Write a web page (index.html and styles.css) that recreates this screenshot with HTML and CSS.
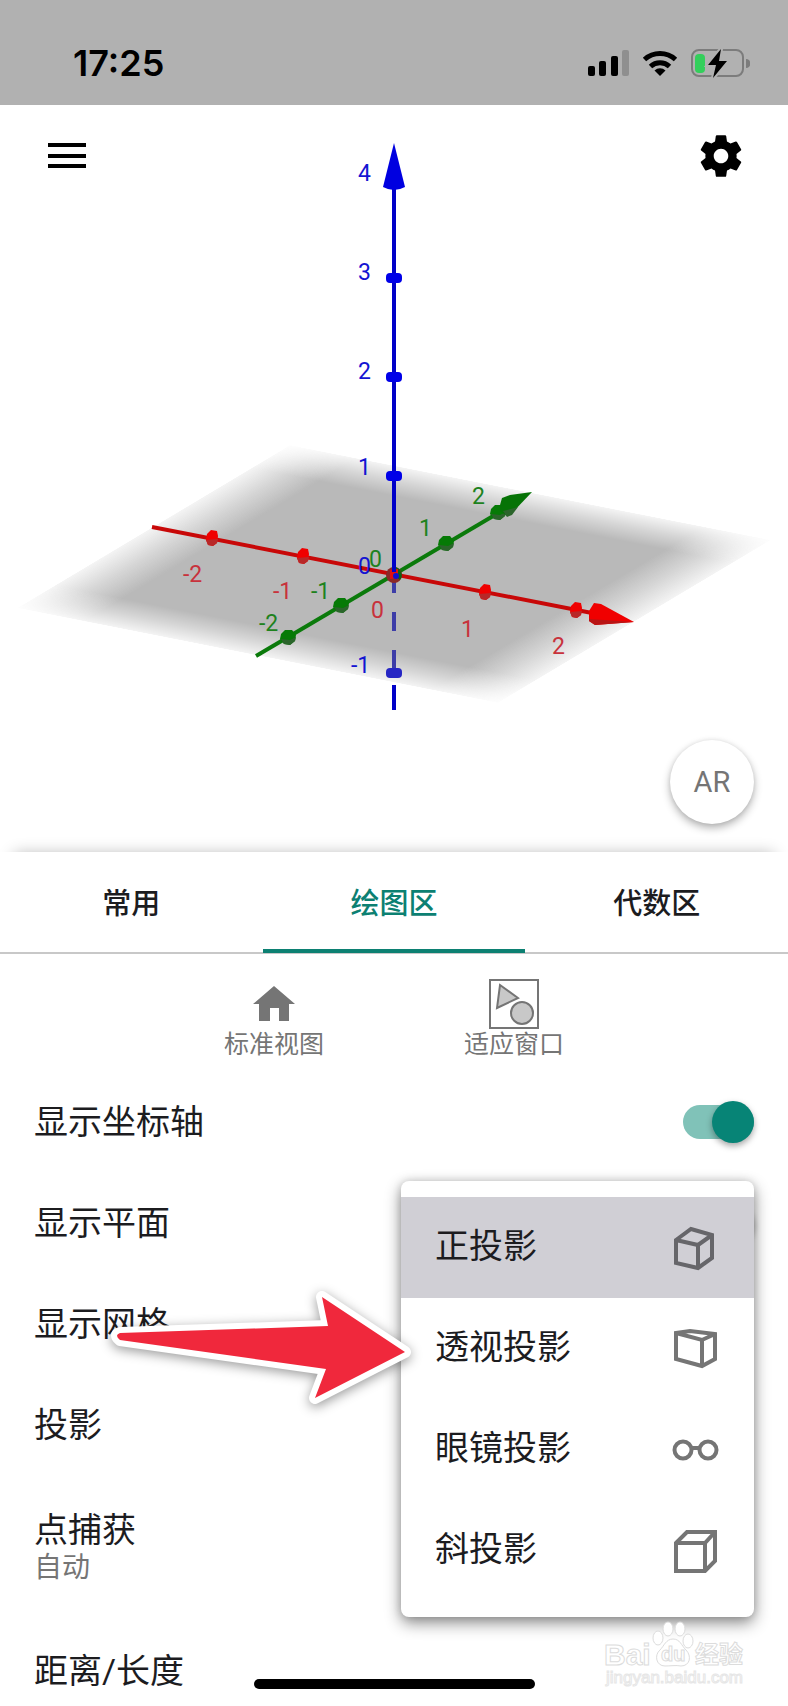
FILE: index.html
```
<!DOCTYPE html>
<html lang="zh-CN">
<head>
    <meta charset="UTF-8">
    <meta name="viewport" content="width=device-width, initial-scale=1">
    <title>3D 计算器</title>
    <link rel="stylesheet" href="styles.css">
</head>
<body>
<div id="app">
    <header class="status">
        <span class="time">17:25</span>
        <svg class="status-icons" viewBox="588 46 162 32" width="162" height="32">
            <rect x="588" y="65" width="7" height="10" rx="2"/>
            <rect x="599" y="60" width="7" height="15" rx="2"/>
            <rect x="611" y="55" width="7" height="20" rx="2"/>
            <rect x="622" y="49" width="7" height="26" rx="2" fill="#8f8f8f"/>
            <g fill="none" stroke="#000" stroke-width="5">
                <path d="M644.500 58.500a23 23 0 0 1 31 0"/>
                <path d="M650.500 65.500a14 14 0 0 1 19 0"/>
            </g>
            <path d="M660 75l-5.500-5.500a8 8 0 0 1 11 0z"/>
            <rect x="692" y="49" width="51" height="26" rx="7" fill="none" stroke="#7c7c7c" stroke-width="2"/>
            <path d="M746 58a4.500 4.500 0 0 1 0 9z" fill="#7c7c7c"/>
            <rect x="695" y="53" width="10" height="19" rx="4" fill="#33cf5b"/>
            <path d="M721 48l-13 16h8l-3 13 14-17h-8z" stroke="#b1b1b1" stroke-width="4"/>
            <path d="M721 48l-13 16h8l-3 13 14-17h-8z"/>
        </svg>
    </header>

    <main class="view">
        <svg class="scene" viewBox="0 105 788 747">
            <defs>
                <linearGradient id="fade-u">
                    <stop offset="0" stop-color="#fff" stop-opacity=".15"/>
                    <stop offset=".07" stop-color="#fff" stop-opacity=".6"/>
                    <stop offset=".14" stop-color="#fff"/>
                    <stop offset=".86" stop-color="#fff"/>
                    <stop offset=".93" stop-color="#fff" stop-opacity=".6"/>
                    <stop offset="1" stop-color="#fff" stop-opacity=".15"/>
                </linearGradient>
                <linearGradient id="fade-v" x2="0" y2="1">
                    <stop offset="0" stop-color="#b9b9b9" stop-opacity=".15"/>
                    <stop offset=".07" stop-color="#b9b9b9" stop-opacity=".6"/>
                    <stop offset=".14" stop-color="#b9b9b9"/>
                    <stop offset=".86" stop-color="#b9b9b9"/>
                    <stop offset=".93" stop-color="#b9b9b9" stop-opacity=".6"/>
                    <stop offset="1" stop-color="#b9b9b9" stop-opacity=".15"/>
                </linearGradient>
                <mask id="edge" maskUnits="userSpaceOnUse" x="0" y="0" width="100" height="100">
                    <rect width="100" height="100" fill="url(#fade-u)"/>
                </mask>
                <g id="tick-x">
                    <path d="M-5-4L-1-8 5-7 6-2 5 5 1 8-4 7-6 2z" fill="#f00000"/>
                    <path d="M-6 2L6 1 5 5 1 8-4 7z" fill="#b82828"/>
                </g>
                <g id="tick-y">
                    <path d="M-7-3L-3-7 4-7 8-2 7 4 2 8-4 7-8 2z" fill="#067a06"/>
                    <path d="M-7 2L2 3 8 0 7 4 2 8-4 7z" fill="#2b652b"/>
                </g>
                <rect id="tick-z" x="-8" y="-5" width="16" height="10" rx="4"/>
            </defs>

            <!-- xOy 平面 -->
            <g transform="matrix(2.73 -1.63 4.81 .95 17 608)">
                <rect width="100" height="100" fill="url(#fade-v)" mask="url(#edge)"/>
            </g>

            <!-- z 轴(平面下方) -->
            <path d="M394 576v17M394 612v19M394 650v20" stroke="#3d3da8" stroke-width="4"/>
            <path d="M394 685v25" stroke="#0000c8" stroke-width="4"/>

            <!-- y 轴 -->
            <path d="M256 656L505 509" stroke="#0b7a0b" stroke-width="4"/>
            <use href="#tick-y" x="288" y="637"/>
            <use href="#tick-y" x="341" y="605"/>
            <use href="#tick-y" x="446" y="543"/>
            <use href="#tick-y" x="498" y="512"/>
            <path d="M500 505l2-7 8-3 22-3-20 21-5 3-7-5z" fill="#067306"/>
            <path d="M503 511l15-4-6 8-5 2z" fill="#2b652b"/>

            <!-- x 轴 -->
            <path d="M152 527L592 613" stroke="#c80808" stroke-width="4"/>
            <use href="#tick-x" x="212" y="538"/>
            <use href="#tick-x" x="303" y="556"/>
            <use href="#tick-x" x="485" y="592"/>
            <use href="#tick-x" x="576" y="610"/>
            <path d="M589 611l5-8 7 1 33 18-39 3-6-4z" fill="#f00000"/>
            <path d="M589 619l45 3-39 3-6-4z" fill="#b81414"/>

            <!-- z 轴 -->
            <circle cx="394" cy="575" r="8" fill="#8c2828"/>
            <path d="M394 567a8 8 0 0 1 6 13l-6-5z" fill="#125f12"/>
            <path d="M390 570l8-1v9l-8 1z" fill="#e01010"/>
            <path d="M394 185v387" stroke="#0000c8" stroke-width="4"/>
            <circle cx="396" cy="576" r="3" fill="#1010d0"/>
            <path d="M394 143l11 44q-11 6-22 0z" fill="#0000e0"/>
            <g fill="#0000e8">
                <use href="#tick-z" x="394" y="278"/>
                <use href="#tick-z" x="394" y="377"/>
                <use href="#tick-z" x="394" y="476"/>
            </g>
            <use href="#tick-z" x="394" y="673" fill="#2626c4"/>

            <g class="num num-z">
                <text x="358" y="181">4</text>
                <text x="358" y="280">3</text>
                <text x="358" y="379">2</text>
                <text x="358" y="475">1</text>
                <text x="358" y="574">0</text>
                <text x="351" y="673">-1</text>
            </g>
            <g class="num num-y">
                <text x="369" y="567">0</text>
                <text x="419" y="536">1</text>
                <text x="472" y="504">2</text>
                <text x="311" y="599">-1</text>
                <text x="259" y="631">-2</text>
            </g>
            <g class="num num-x">
                <text x="183" y="582">-2</text>
                <text x="273" y="599">-1</text>
                <text x="371" y="618">0</text>
                <text x="461" y="637">1</text>
                <text x="552" y="654">2</text>
            </g>
        </svg>
        <button class="icon-btn menu-btn" aria-label="菜单">
            <svg viewBox="0 0 38 26" width="38" height="26"><path d="M0 0h38v4H0zM0 11h38v4H0zM0 21h38v4H0z"/></svg>
        </button>
        <button class="icon-btn gear-btn" aria-label="设置">
            <svg viewBox="0 0 24 24" width="50" height="50"><path d="M19.430 12.980c.04-.32.07-.64.07-.98s-.03-.66-.07-.98l2.110-1.650c.19-.15.24-.42.12-.64l-2-3.460c-.12-.22-.39-.3-.61-.22l-2.490 1c-.52-.4-1.080-.73-1.690-.98l-.38-2.650C14.460 2.180 14.250 2 14 2h-4c-.25 0-.46.18-.49.42l-.38 2.650c-.61.25-1.170.59-1.690.98l-2.490-1c-.23-.09-.49 0-.61.22l-2 3.460c-.13.22-.07.49.12.64l2.110 1.650c-.04.32-.07.65-.07.98s.03.66.07.98l-2.110 1.650c-.19.15-.24.42-.12.64l2 3.460c.12.22.39.3.61.22l2.490-1c.52.4 1.080.73 1.690.98l.38 2.650c.03.24.24.42.49.42h4c.25 0 .46-.18.49-.42l.38-2.650c.61-.25 1.170-.59 1.690-.98l2.490 1c.23.09.49 0 .61-.22l2-3.460c.12-.22.07-.49-.12-.64l-2.110-1.650zM12 15.500c-1.930 0-3.500-1.570-3.500-3.500s1.570-3.500 3.500-3.500 3.500 1.570 3.500 3.500-1.570 3.500-3.500 3.500z"/></svg>
        </button>
        <button class="ar-btn">AR</button>
    </main>

    <section class="panel">
        <nav class="tabs">
            <button>常用</button>
            <button class="selected">绘图区</button>
            <button>代数区</button>
        </nav>

        <div class="actions">
            <button>
                <svg viewBox="0 0 50 50" width="50" height="50"><path d="M25 7l21 18h-6v17H30V29h-9v13H10V25H4z" fill="#757575"/></svg>
                <span>标准视图</span>
            </button>
            <button>
                <svg viewBox="0 0 50 50" width="50" height="50" fill="#c8c8c8" stroke="#757575" stroke-width="2">
                    <rect x="1" y="1" width="48" height="48" fill="none"/>
                    <path d="M11 6l18 13L8 29z"/>
                    <circle cx="33" cy="34" r="11"/>
                </svg>
                <span>适应窗口</span>
            </button>
        </div>

        <div class="settings">
            <div class="row">
                <label for="axes">显示坐标轴</label>
                <input type="checkbox" class="switch" id="axes" checked>
            </div>
            <div class="row">
                <label for="plane">显示平面</label>
                <input type="checkbox" class="switch" id="plane" checked>
            </div>
            <div class="row">
                <label for="grid">显示网格</label>
                <input type="checkbox" class="switch" id="grid">
            </div>
            <div class="row"><span>投影</span></div>
            <div class="row row-double">
                <div>点捕获<small>自动</small></div>
            </div>
            <div class="row"><span>距离/长度</span></div>

            <div class="dropdown">
                <button class="selected">
                    <span>正投影</span>
                    <svg viewBox="0 0 44 44" width="44" height="44"><path d="M2 14L17 3l21 6v23L24 42 2 37zl22 5 14-10M24 19v22"/></svg>
                </button>
                <button>
                    <span>透视投影</span>
                    <svg viewBox="0 0 44 44" width="44" height="44"><path d="M2 6l14-2 25 3v25l-13 7-26-7zl26 7 13-6M28 13v26"/></svg>
                </button>
                <button>
                    <span>眼镜投影</span>
                    <svg viewBox="0 0 44 44" width="44" height="44"><circle cx="9" cy="22" r="8.500"/><circle cx="34" cy="22" r="8.500"/><path d="M17 20h9"/></svg>
                </button>
                <button>
                    <span>斜投影</span>
                    <svg viewBox="0 0 44 44" width="44" height="44"><path d="M2 14L13 3h28v29L31 42H2zh29L41 3M31 14v28"/></svg>
                </button>
            </div>

            <svg class="pointer" viewBox="100 1280 320 136" width="320" height="136">
                <path d="M120 1333l208-7-6-29 83 55-90 46 11-29-206-29q-6-5 0-7z"/>
            </svg>
        </div>
    </section>

    <svg class="watermark" viewBox="600 1618 150 70" width="150" height="70">
        <g class="paw">
            <ellipse cx="658" cy="1638" rx="5" ry="7"/>
            <ellipse cx="668" cy="1629" rx="5" ry="7"/>
            <ellipse cx="680" cy="1629" rx="5" ry="7"/>
            <ellipse cx="688" cy="1641" rx="5" ry="7"/>
            <path d="M673 1639c-7 0-9 7-13 11-6 5-4 16 5 16 5 0 11-1 16 0 9 0 11-10 5-16-5-5-6-11-13-11z"/>
        </g>
        <text x="604" y="1665" font-size="30">Bai</text>
        <text x="661" y="1661" font-size="20">du</text>
        <text x="695" y="1663" font-size="24">经验</text>
        <text class="url" x="606" y="1683" font-size="17">jingyan.baidu.com</text>
    </svg>
    <div class="home-bar"></div>
</div>
</body>
</html>
```
FILE: styles.css
```
*{
    padding: 0;
    margin: 0;
    box-sizing: border-box;
}
body{
    font-family: Roboto, "Noto Sans CJK SC", sans-serif;
    color: #1c1c1f;
    background: #fff;
}
button{
    border: none;
    background: none;
    font: inherit;
    color: inherit;
    cursor: pointer;
}
svg{
    display: block;
}
#app{
    position: relative;
    height: 100vh;
    overflow: hidden;
}

/* 状态栏 */
.status{
    display: flex;
    justify-content: space-between;
    align-items: center;
    height: 105px;
    padding: 20px 38px 0 73px;
    background: #b1b1b1;
}
.time{
    font: 600 36px Inter, sans-serif;
    color: #000;
}

/* 3D 视图 */
.view{
    position: relative;
}
.scene{
    width: 100%;
}
.num{
    font-size: 23px;
}
.num-x{
    fill: #c8323c;
}
.num-y{
    fill: #1e821e;
}
.num-z{
    fill: #1414d2;
}
.icon-btn{
    position: absolute;
}
.menu-btn{
    left: 48px;
    top: 38px;
}
.gear-btn{
    right: 42px;
    top: 26px;
}
.ar-btn{
    position: absolute;
    right: 34px;
    bottom: 28px;
    width: 84px;
    height: 84px;
    border-radius: 50%;
    background: #fff;
    color: #757575;
    font-size: 29px;
    box-shadow: 0 4px 8px rgba(0,0,0,.3), 0 0 4px rgba(0,0,0,.08);
}

/* 设置面板 */
.panel{
    position: relative;
    background: #fff;
}
.panel:before{
    content: "";
    position: absolute;
    z-index: -1;
    left: 0;
    right: 0;
    top: 0;
    height: 60px;
    box-shadow: 0 -12px 16px -14px rgba(0,0,0,.3);
}
.tabs{
    display: flex;
    height: 102px;
    border-bottom: 2px solid #c8c8c8;
}
.tabs button{
    flex: 1;
    height: 101px;
    border-bottom: 4px solid transparent;
    font-size: 29px;
    font-weight: 500;
}
.tabs .selected{
    color: #0c8072;
    border-color: #0c8072;
}
.actions{
    display: flex;
    justify-content: center;
    gap: 140px;
    padding: 25px 0 10px;
}
.actions button{
    display: flex;
    flex-direction: column;
    align-items: center;
    font-size: 25px;
    line-height: 32px;
    color: #757575;
}
.settings{
    position: relative;
    font-size: 34px;
}
.row{
    display: flex;
    justify-content: space-between;
    align-items: center;
    height: 101px;
    padding: 0 34px;
}
.row label,
.row span{
    padding-bottom: 4px;
}
.row-double{
    height: 145px;
    line-height: 40px;
}
.row small{
    display: block;
    font-size: 28px;
    line-height: 36px;
    color: #757575;
}
.switch{
    appearance: none;
    position: relative;
    width: 71px;
    height: 34px;
    border-radius: 17px;
    background: #b4b4b4;
}
.switch:before{
    content: "";
    position: absolute;
    left: 0;
    top: -4px;
    width: 42px;
    height: 42px;
    border-radius: 50%;
    background: #fff;
    box-shadow: 0 3px 6px rgba(0,0,0,.35);
}
.switch:checked{
    background: #80c2b8;
}
.switch:checked:before{
    left: 29px;
    background: #078476;
}

/* 投影菜单 */
.dropdown{
    position: absolute;
    right: 34px;
    top: 110px;
    width: 353px;
    padding: 16px 0;
    border-radius: 8px;
    background: #fff;
    box-shadow: 0 6px 16px rgba(0,0,0,.45), 0 0 8px rgba(0,0,0,.15);
}
.dropdown button{
    display: flex;
    justify-content: space-between;
    align-items: center;
    width: 100%;
    height: 101px;
    padding: 0 36px 0 34px;
}
.dropdown span{
    padding-bottom: 8px;
}
.dropdown .selected{
    background: #d0cfd5;
}
.dropdown svg{
    overflow: visible;
    fill: none;
    stroke: #757575;
    stroke-width: 4;
}
.dropdown .selected svg{
    stroke: #66666a;
}
.pointer{
    position: absolute;
    left: 100px;
    top: 209px;
    overflow: visible;
    fill: #f0283c;
    stroke: #fff;
    stroke-width: 12;
    stroke-linejoin: round;
    paint-order: stroke;
    filter: drop-shadow(0 3px 6px rgba(0,0,0,.4));
}

.watermark{
    position: absolute;
    right: 38px;
    bottom: 18px;
    fill: #fff;
    stroke: #dcdcdc;
    stroke-width: 1;
    font-family: "Liberation Sans", "Noto Sans CJK SC", sans-serif;
    font-weight: bold;
}
.watermark .url{
    font-weight: normal;
    stroke: #e6e6e6;
}
.home-bar{
    position: absolute;
    left: 50%;
    bottom: 17px;
    width: 281px;
    height: 10px;
    margin-left: -140px;
    border-radius: 5px;
    background: #000;
}
```
